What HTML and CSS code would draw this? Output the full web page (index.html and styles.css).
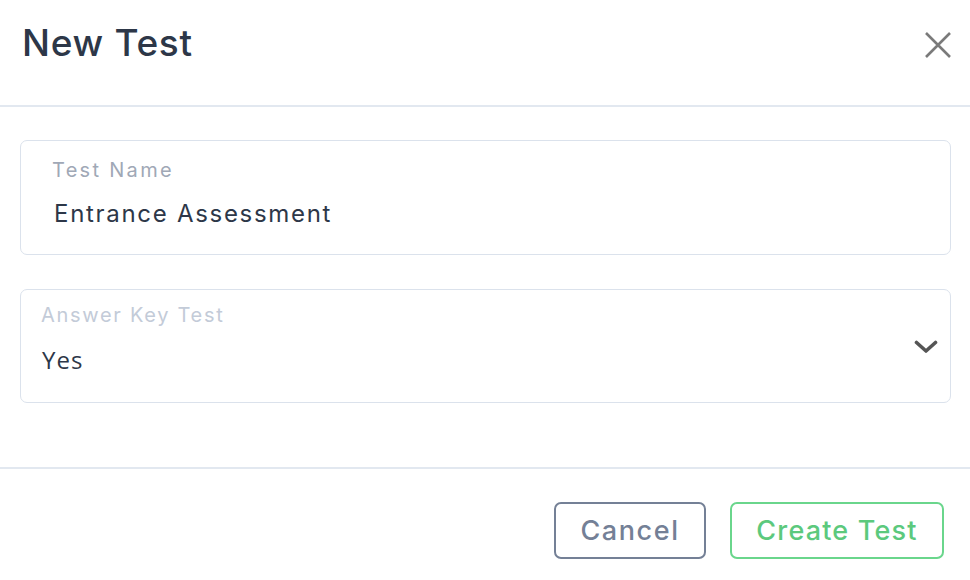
FILE: index.html
```html
<!DOCTYPE html>
<html lang="en">
<head>
    <meta charset="UTF-8">
    <meta name="viewport" content="width=device-width, initial-scale=1.0">
    <title>New Test</title>
    <link rel="stylesheet" href="styles.css">
</head>
<body>

<div class="modal">
    <!-- Header -->
    <div class="modal-header">
        <h1>New Test</h1>
        <button type="button" class="close-btn" aria-label="Close">
            <svg width="28" height="28" viewBox="0 0 28 28"><path d="M2 2 L26 26 M26 2 L2 26" stroke="#7a7a7a" stroke-width="2.6" fill="none"/></svg>
        </button>
    </div>

    <!-- Body -->
    <div class="modal-body">
        <div class="field field-input">
            <label for="testName">Test Name</label>
            <input type="text" id="testName" value="Entrance Assessment">
        </div>
        <div class="field field-select">
            <label for="answerKey">Answer Key Test</label>
            <div class="select-value" id="answerKey">Yes</div>
            <svg class="chevron" width="24" height="14" viewBox="0 0 24 14"><path d="M2.5 2.5 L12 11 L21.5 2.5" stroke="#555" stroke-width="3.6" fill="none" stroke-linecap="round" stroke-linejoin="round"/></svg>
        </div>
    </div>

    <!-- Footer -->
    <div class="modal-footer">
        <button type="button" class="btn btn-cancel">Cancel</button>
        <button type="button" class="btn btn-create">Create Test</button>
    </div>
</div>

</body>
</html>
```

FILE: styles.css
```css
body { margin: 0; font-family: Inter, "Noto Sans", sans-serif; background-color: #fff; color: #2d3748; }
.modal { width: 970px; height: 580px; }

.modal-header { height: 107px; box-sizing: border-box; padding: 20px 18px 0 22px; display: flex; justify-content: space-between; align-items: flex-start; border-bottom: 2px solid #e2e8f0; }
.modal-header h1 { margin: 0; font-size: 37px; font-weight: 500; line-height: 45px; color: #2d3748; letter-spacing: 0.7px; }
.close-btn { background: none; border: none; padding: 0; margin-top: 11px; cursor: pointer; width: 28px; height: 28px; }

.modal-body { padding: 33px 19px 64px 20px; display: flex; flex-direction: column; gap: 34px; }
.field { position: relative; border: 1px solid #dbe2ec; border-radius: 7px; display: flex; flex-direction: column; }
.field label { font-size: 20px; line-height: 24px; font-weight: 400; }
.field-input { height: 115px; box-sizing: border-box; padding: 17px 20px 0 31px; }
.field-input label { color: #a0a8b6; letter-spacing: 2.3px; }
.field-input input { border: none; outline: none; padding: 0; margin: 17px 0 0 2px; font-family: inherit; font-size: 24px; line-height: 30px; color: #2d3748; background: none; letter-spacing: 1.7px; }
.field-select { height: 114px; box-sizing: border-box; padding: 13px 20px 0 20px; }
.field-select label { color: #c3cbd8; letter-spacing: 1.7px; }
.select-value { margin: 18px 0 0 1px; font-family: "Open Sans", sans-serif; font-size: 24px; line-height: 30px; color: #2d3748; letter-spacing: 1px; }
.chevron { position: absolute; right: 12px; top: 50px; }

.modal-footer { border-top: 2px solid #e2e8f0; padding: 33px 26px 0 0; display: flex; justify-content: flex-end; gap: 24px; }
.btn { height: 57px; box-sizing: border-box; background: #fff; border-radius: 7px; border: 2px solid; font-family: inherit; font-size: 27px; font-weight: 500; cursor: pointer; }
.btn-cancel { width: 152px; border-color: #748096; color: #748096; letter-spacing: 1.6px; }
.btn-create { width: 214px; border-color: #6ad68c; color: #5cc97d; letter-spacing: 1.2px; }
```
